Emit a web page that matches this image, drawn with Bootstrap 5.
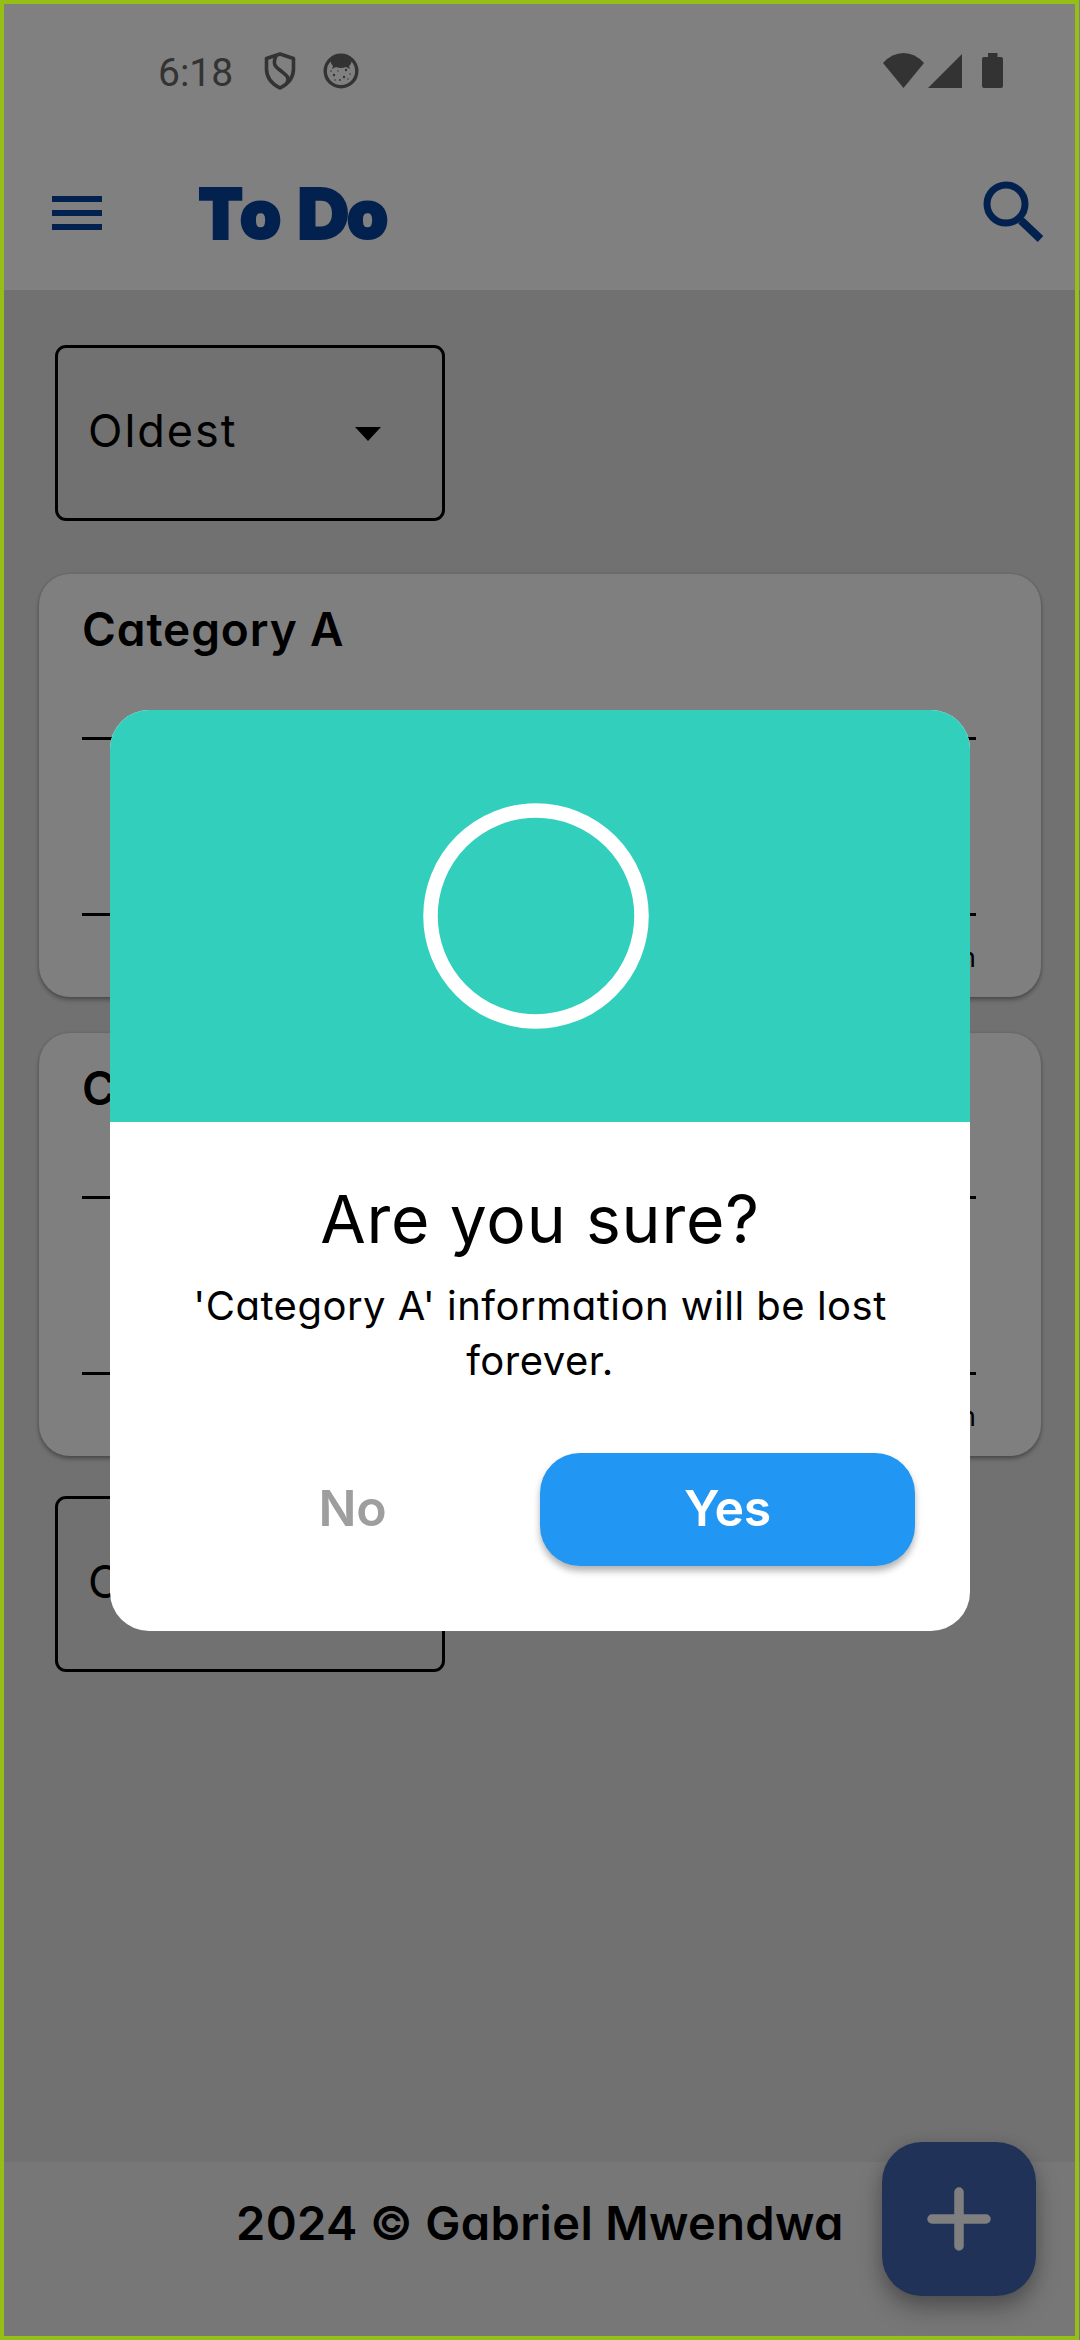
<!DOCTYPE html>
<html lang="en">
<head>
<meta charset="utf-8">
<meta name="viewport" content="width=device-width, initial-scale=1">
<title>To Do</title>
<link href="https://cdn.jsdelivr.net/npm/bootstrap@5.3.0/dist/css/bootstrap.min.css" rel="stylesheet">
<style>
  body { margin: 0; background: #717171; font-family: Inter, "Open Sans", sans-serif; font-feature-settings: "cv11"; color: #000; }
  .screen { width: 1080px; height: 2340px; background: #717171; }
  .frame { inset: 0 1px 0 0; border: 4px solid #95bf17; z-index: 30; pointer-events: none; }
  .topbar { height: 290px; background: #808080; }
  .statusbar { height: 142px; padding: 0 77px 0 158px; }
  .clock { font: 400 39px/46px Roboto, sans-serif; color: #333; width: 106px; padding-top: 3px; }
  .appbar { height: 148px; padding: 0 36px 6px 52px; }
  .brand { font: 900 65px/80px Lato, sans-serif; color: #03214f; -webkit-text-stroke: 6px #03214f; paint-order: stroke fill; stroke-linejoin: round; margin-left: 99px; padding-bottom: 3px; letter-spacing: 1.5px; font-kerning: none; }
  .search-icon { margin-bottom: 3px; }
  .content { padding: 55px 39px 0; }
  .sorter { width: 390px; height: 176px; margin-left: 16px; padding: 0 61px 4px 30px; border: 3px solid #000; border-radius: 11px; font-size: 45px; line-height: 60px; letter-spacing: 2px; }
  .sorter svg { margin-top: 6px; }
  .sorter-top { margin-bottom: 53px; }
  .sorter-end { margin-top: 2px; }
  .task { height: 423px; background: #7f7f7f; border: 0; border-radius: 31px; box-shadow: 0 3px 4px rgba(0,0,0,.3), 0 0 3px rgba(0,0,0,.15); padding: 24px 65px 0 43px; margin-bottom: 36px; color: #000; }
  .task-name { font-size: 46px; line-height: 62px; font-weight: 600; letter-spacing: .9px; }
  .rule { height: 3px; background: #000; }
  .rule-top { margin: 77px 0 173px; }
  .when { font-size: 27px; line-height: 36px; text-align: right; padding-top: 24px; }
  .foot { height: 178px; background: #777; padding: 31px 0 0 236px; font-size: 47px; line-height: 60px; font-weight: 600; letter-spacing: .35px; }
  .fab { right: 44px; bottom: 44px; width: 154px; height: 154px; border-radius: 40px; background: #213259; box-shadow: 0 14px 24px rgba(0,0,0,.25), 0 4px 16px rgba(0,0,0,.15); border: 0; padding: 0; z-index: 5; }
  .veil { inset: 0; z-index: 10; }
  .dialog-box { width: 860px; height: 921px; border-radius: 39px; background: #fff; overflow: hidden; }
  .hero { height: 412px; background: #33cfbd; padding-right: 8px; }
  .ask { font-size: 66px; line-height: 80px; margin-top: 57px; letter-spacing: .8px; }
  .info { font-size: 40px; line-height: 55px; margin-top: 19px; letter-spacing: .5px; }
  .choices { margin-top: 65px; padding: 0 55px; height: 113px; }
  .choices button { border: 0; width: 375px; height: 113px; font-size: 50px; line-height: 60px; font-weight: 600; padding: 0 0 2px; letter-spacing: -.3px; }
  .no { color: #9e9e9e; background: transparent; }
  .yes { color: #fff; background: #2196f3; border-radius: 40px; box-shadow: 0 5px 7px rgba(0,0,0,.3); }
</style>
</head>
<body>
<div class="screen position-relative overflow-hidden d-flex flex-column">
  <header class="topbar">
    <div class="statusbar d-flex align-items-center justify-content-between">
      <div class="d-flex align-items-center">
        <span class="clock">6:18</span>
        <svg width="32" height="38" viewBox="0 0 32 38" fill="none" stroke="#333" stroke-width="3.6" stroke-linejoin="round"><path d="M16 2 29.500 6.500V17C29.500 26 24 32 16 36 8 32 2.500 26 2.500 17V6.500Z"/><path d="M12 4C8 13 12 15 17 19 22 23 26 25 23 31"/></svg>
        <svg class="ms-4" width="42" height="38" viewBox="-3 0 42 38"><circle cx="18" cy="19" r="15.800" fill="none" stroke="#333" stroke-width="3.400"/><path d="M7 8Q18 1 29 8 28 13 26 14L27 17 23 15Q18 17 13 15L9 17 10 14Q8 12 7 8Z" fill="#333"/><g fill="#333"><circle cx="23" cy="18" r="1.200"/><circle cx="11" cy="23" r="1.200"/><circle cx="21" cy="25" r="1.200"/><circle cx="17" cy="28" r=".9"/><circle cx="15" cy="19" r=".7"/><circle cx="27" cy="22" r=".8"/><circle cx="8" cy="19" r=".8"/><circle cx="12" cy="28" r=".8"/><circle cx="25" cy="27" r=".7"/></g></svg>
      </div>
      <svg width="120" height="36" viewBox="0 0 120 36" fill="#333"><path d="M0 10Q9 0 20.500 0T41 10L20.500 35Z"/><path d="M45 35 79 1V35Z"/><path d="M105 0h9.500v4H118q2 0 2 2V33q0 2-2 2H101q-2 0-2-2V6q0-2 2-2h4Z"/></svg>
    </div>
    <div class="appbar d-flex align-items-center">
      <svg width="50" height="34" fill="#03214f"><path d="M0 0H50V6H0ZM0 14H50V20H0ZM0 28H50V34H0Z"/></svg>
      <span class="brand">To Do</span>
      <svg class="search-icon ms-auto" width="61" height="61" viewBox="0 0 61 61" fill="none" stroke="#03214f"><circle cx="23" cy="23" r="19" stroke-width="7"/><path d="M38 39.500 57.500 58" stroke-width="8"/></svg>
    </div>
  </header>
  <main class="content flex-grow-1">
    <div class="sorter sorter-top d-flex align-items-center justify-content-between"><span>Oldest</span><svg width="26" height="14"><path d="M0 0H26L13 14Z"/></svg></div>
    <section class="task card">
      <div class="task-name">Category A</div>
      <div class="rule rule-top"></div>
      <div class="rule"></div>
      <div class="when">6:18 pm</div>
    </section>
    <section class="task card">
      <div class="task-name">Category B</div>
      <div class="rule rule-top"></div>
      <div class="rule"></div>
      <div class="when">6:18 pm</div>
    </section>
    <div class="pt-1"><div class="sorter d-flex align-items-center justify-content-between"><span>Oldest</span></div></div>
  </main>
  <footer class="foot">2024 © Gabriel Mwendwa</footer>
  <button class="fab position-absolute d-flex align-items-center justify-content-center" aria-label="Add"><svg width="64" height="64" stroke="#7f7f7f" stroke-width="9.500" stroke-linecap="round"><path d="M32 5V59M5 32H59"/></svg></button>
  <div class="veil position-absolute d-flex align-items-center justify-content-center">
    <div class="dialog-box">
      <div class="hero d-flex align-items-center justify-content-center"><svg width="226" height="226" fill="none" stroke="#fff" stroke-width="14.500"><circle cx="113" cy="113" r="105.500"/></svg></div>
      <div class="ask text-center">Are you sure?</div>
      <div class="info text-center">'Category A' information will be lost<br>forever.</div>
      <div class="choices d-flex"><button class="no">No</button><button class="yes">Yes</button></div>
    </div>
  </div>
  <div class="frame position-absolute"></div>
</div>
<script src="https://cdn.jsdelivr.net/npm/bootstrap@5.3.0/dist/js/bootstrap.bundle.min.js"></script>
</body>
</html>
